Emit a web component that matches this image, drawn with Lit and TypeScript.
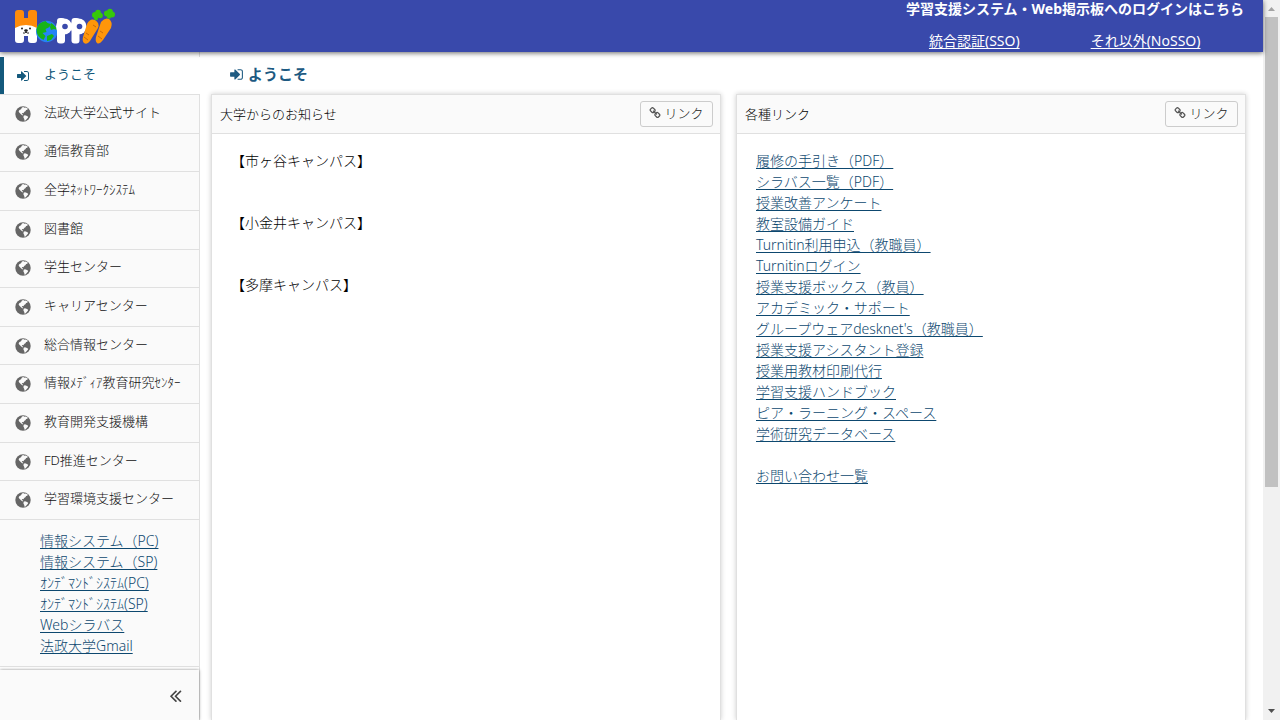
import { LitElement, html, css, svg } from "lit";
import { customElement, property } from "lit/decorators.js";

const icons: Record<string, unknown> = {
  signin: svg`<path d="M1312 896q0 26-19 45l-544 544q-19 19-45 19t-45-19-19-45v-288h-448q-26 0-45-19t-19-45v-384q0-26 19-45t45-19h448v-288q0-26 19-45t45-19 45 19l544 544q19 19 19 45zm352-352v704q0 119-84.5 203.500t-203.500 84.500h-320q-13 0-22.500-9.500t-9.500-22.500q0-4-1-20t-.5-26.500 3-23.500 10-19.500 20.500-6.500h320q66 0 113-47t47-113v-704q0-66-47-113t-113-47h-312l-11.500-1-11.500-3-8-5.500-7-9-2-13.500q0-4-1-20t-.5-26.500 3-23.500 10-19.500 20.500-6.500h320q119 0 203.500 84.500t84.500 203.500z"/>`,
  link: svg`<path d="M1520 1216q0-40-28-68l-208-208q-28-28-68-28-42 0-72 32 3 3 19 18.500t21.500 21.500 15 19 13 25.500 3.500 27.500q0 40-28 68t-68 28q-15 0-27.500-3.500t-25.500-13-19-15-21.500-21.500-18.500-19q-33 31-33 73 0 40 28 68l206 207q27 27 68 27 40 0 68-26l147-146q28-28 28-67zm-703-705q0-40-28-68l-206-207q-28-28-68-28-39 0-68 27l-147 146q-28 28-28 67 0 40 28 68l208 208q27 27 68 27 42 0 72-31-3-3-19-18.500t-21.500-21.500-15-19-13-25.500-3.500-27.500q0-40 28-68t68-28q15 0 27.500 3.500t25.500 13 19 15 21.500 21.500 18.500 19q33-31 33-73zm895 705q0 120-85 203l-147 146q-83 83-203 83-121 0-204-85l-206-207q-83-83-83-203 0-123 88-209l-88-88q-86 88-208 88-120 0-204-84l-208-208q-84-84-84-204t85-203l147-146q83-83 203-83 121 0 204 85l206 207q83 83 83 203 0 123-88 209l88 88q86-88 208-88 120 0 204 84l208 208q84 84 84 204z"/>`,
  collapse: svg`<path d="M1011 1376q0 13-10 23l-50 50q-10 10-23 10t-23-10l-466-466q-10-10-10-23t10-23l466-466q10-10 23-10t23 10l50 50q10 10 10 23t-10 23l-393 393 393 393q10 10 10 23zm384 0q0 13-10 23l-50 50q-10 10-23 10t-23-10l-466-466q-10-10-10-23t10-23l466-466q10-10 23-10t23 10l50 50q10 10 10 23t-10 23l-393 393 393 393q10 10 10 23z"/>`,
  globe: svg`<circle cx="896" cy="896" r="768"/>
    <path fill="#fafafa" d="M800 240l120-30 110 60 130-20 210 110-40 110-130 40-60 110-100 50-110 150-100-30-60 90 90 50 50 100-100-20-140-110-150-150-60-140 90-120 150-70 50-90zM960 1080l130-60 150 60 170 80-30 110-110 120-130 160-90 20-30-180-80-140z"/>`,
};

@customElement("ui-icon")
class UiIcon extends LitElement {
  @property() name = "globe";
  static styles = css`
    :host { display: inline-flex; flex: none; }
    svg { width: 100%; height: 100%; fill: currentColor; }
  `;
  render() {
    return html`<svg viewBox="0 0 1792 1792" aria-hidden="true">${icons[this.name]}</svg>`;
  }
}

@customElement("link-panel")
class LinkPanel extends LitElement {
  @property() heading = "";
  static styles = css`
    :host {
      display: flex; flex-direction: column; flex: 1; min-width: 0;
      background: #fff; border: 1px solid #e0e0e0; border-bottom: 0;
      box-shadow: 0 0 5px rgba(0, 0, 0, 0.2);
    }
    .head {
      display: flex; align-items: center; justify-content: space-between;
      height: 38px; padding: 0 7px 0 8px; background: #fafafa; border-bottom: 1px solid #e0e0e0;
    }
    h2 { margin: 0; font-size: 13px; font-weight: inherit; line-height: 20px; color: #000; }
    button {
      display: flex; align-items: center; justify-content: center; gap: 3px;
      width: 73px; height: 26px; padding: 0 0 2px; font: inherit; font-size: 13px; line-height: 20px;
      color: #222; background: #fafafa; border: 1px solid #ccc; border-radius: 3px;
    }
    ui-icon { width: 12px; height: 12px; color: #555; }
    .body { padding: 16px 19px; line-height: 21px; }
  `;
  render() {
    return html`
      <div class="head">
        <h2>${this.heading}</h2>
        <button type="button"><ui-icon name="link"></ui-icon>リンク</button>
      </div>
      <div class="body"><slot></slot></div>
    `;
  }
}

const SITES = [
  "法政大学公式サイト", "通信教育部", "全学ﾈｯﾄﾜｰｸｼｽﾃﾑ", "図書館", "学生センター", "キャリアセンター",
  "総合情報センター", "情報ﾒﾃﾞｨｱ教育研究ｾﾝﾀｰ", "教育開発支援機構", "FD推進センター", "学習環境支援センター",
];
const SYSTEMS = [
  "情報システム（PC)", "情報システム（SP)", "ｵﾝﾃﾞﾏﾝﾄﾞｼｽﾃﾑ(PC)", "ｵﾝﾃﾞﾏﾝﾄﾞｼｽﾃﾑ(SP)", "Webシラバス", "法政大学Gmail",
];
const CAMPUSES = ["【市ヶ谷キャンパス】", "【小金井キャンパス】", "【多摩キャンパス】"];
const LINKS = [
  "履修の手引き（PDF）", "シラバス一覧（PDF）", "授業改善アンケート", "教室設備ガイド", "Turnitin利用申込（教職員）",
  "Turnitinログイン", "授業支援ボックス（教員）", "アカデミック・サポート", "グループウェアdesknet's（教職員）",
  "授業支援アシスタント登録", "授業用教材印刷代行", "学習支援ハンドブック", "ピア・ラーニング・スペース", "学術研究データベース",
];

@customElement("app-root")
class AppRoot extends LitElement {
  static styles = css`
    :host {
      display: grid; grid-template-columns: minmax(0, 1fr) 17px; height: 100vh; overflow: hidden;
      font-family: "Noto Sans", "Noto Sans CJK JP", sans-serif; font-size: 14px; line-height: 21px;
      font-weight: 300; color: #000; background: #fff;
    }
    a { color: #0d486f; text-decoration: underline; text-underline-offset: 2px; }
    .page { display: flex; flex-direction: column; min-height: 0; }
    header {
      display: flex; justify-content: space-between; height: 52px; flex: none; z-index: 1;
      padding: 0 19px 0 14px; background: #3949ab; color: #fff;
      box-shadow: 0 1px 5px rgba(0, 0, 0, 0.6);
    }
    .logo { display: block; width: 102px; height: 52px; }
    .login p { margin: 0; font-weight: 700; line-height: 18px; white-space: nowrap; }
    .login nav { display: flex; gap: 71px; padding: 12px 0 0 23px; }
    .login a { color: #fff; font-weight: 400; }

    .columns { display: flex; flex: 1; min-height: 0; }
    aside {
      display: flex; flex-direction: column; flex: none; width: 199px; padding-top: 5px;
      border-right: 1px solid #e0e0e0;
    }
    .current {
      display: flex; align-items: center; gap: 14px; flex: none; height: 37px; padding-left: 12px; margin-right: -1px;
      border-left: 4px solid #14597c; background: #fff;
    }
    .current, .site { color: #111; font-size: 13px; line-height: 20px; text-decoration: none; }
    .current { color: #14597c; font-weight: 400; }
    .current ui-icon { width: 14px; height: 14px; }
    .label { padding-bottom: 4px; }
    .sites { display: flex; flex-direction: column; flex: 1; margin: 0; padding: 0; list-style: none; background: #fafafa; }
    .sites li { display: flex; flex: 1; border-top: 1px solid #e0e0e0; }
    .site { display: flex; align-items: center; flex: 1; gap: 12px; padding-left: 14px; white-space: nowrap; }
    .site ui-icon { width: 18px; height: 18px; color: #666; }
    .systems {
      margin: 0; padding: 10px 0 10px 40px; list-style: none; background: #fafafa;
      border: 1px solid #e0e0e0; border-width: 1px 0;
    }
    .foot {
      display: flex; justify-content: flex-end; align-items: center; box-sizing: border-box; flex: none;
      height: 50px; margin-top: 3px; padding-right: 13px;
      background: #fafafa; box-shadow: 0 0 3px rgba(0, 0, 0, 0.45);
    }
    .foot button { display: flex; padding: 0; border: 0; background: none; color: #444; }
    .foot ui-icon { width: 21px; height: 21px; }

    main { display: flex; flex-direction: column; flex: 1; min-width: 0; padding: 12px 17px 0 11px; }
    h1 {
      display: flex; align-items: center; gap: 4px; margin: 0; padding: 0 0 10px 18px;
      font-size: 15px; line-height: 20px; color: #1d5a82;
    }
    h1 ui-icon { width: 15px; height: 15px; }
    .panels { display: flex; flex: 1; gap: 15px; }
    .campus { margin: 0 0 41px; }
    .links { margin: 0; padding: 0; list-style: none; }
    .links li:last-child { margin-top: 21px; }

    .scroll { display: flex; flex-direction: column; align-items: center; background: #f1f1f1; }
    .scroll svg { width: 17px; height: 17px; flex: none; }
    .track { flex: 1; width: 13px; }
    .thumb { height: 68.500%; background: #c1c1c1; }
  `;

  render() {
    return html`
      <div class="page">
        <header>
          <svg class="logo" viewBox="0 0 102 52" role="img" aria-label="Hoppii">
            <path fill="#fff" d="M1 24h22v16q0 3-3 3h-3q-3 0-3-3v-4h-4v4q0 3-3 3H4q-3 0-3-3z"/>
            <path fill="#ff8c0a" d="M1 28V13q0-3 3-3h3q3 0 3 3v5h4v-5q0-3 3-3h3q3 0 3 3v15q-5-3-11-3T1 28z"/>
            <circle cx="8" cy="28.500" r="1" fill="#222"/><circle cx="16" cy="28.500" r="1" fill="#222"/>
            <ellipse cx="12" cy="30.500" rx="1.800" ry="1.200" fill="#222"/>
            <path fill="none" stroke="#222" d="M12 31v1q-1 1.500-3 1m3-1q1 1.500 3 1"/>
            <circle cx="32.700" cy="31.500" r="10.700" fill="#2683f5"/>
            <path fill="#17b317" d="M22.500 29q2-7 9-8l2 2 3 1-1 3-4 2 1 3-4 1 3 3-2 4q-7-3-7-11zM37 23q5 3 6 7l-3-1-3 1-1-3zM33 36l5-2 2 2-3 4-4 1z"/>
            <g fill="#fff">
              <rect x="43" y="18" width="8" height="25.500" rx="3"/><circle cx="50" cy="26.500" r="8"/>
              <rect x="57.500" y="18" width="8" height="25.500" rx="3"/><circle cx="64.500" cy="26.500" r="8"/>
            </g>
            <g fill="#3949ab"><circle cx="51" cy="26.500" r="2.800"/><circle cx="65.500" cy="26.500" r="2.800"/></g>
            <g fill="#ff960a">
              <path d="M73 24q3-6 8-4 5 3 3 8l-8 13q-3 4-6 2-2-2-1-6zM87 22q4-5 8-3 4 3 2 9l-8 12q-4 5-6 3-2-2-1-6z"/>
            </g>
            <path fill="none" stroke="#c76a09" d="M72 33l3 2m-5 2 4 3M86 31l3 2m-5 3 4 3M79 25l3 2"/>
            <g fill="#36c90a">
              <circle cx="81" cy="15" r="3"/><circle cx="84" cy="12.500" r="2.800"/><circle cx="86" cy="15.500" r="2.800"/><circle cx="82" cy="18" r="2.200"/>
              <circle cx="93" cy="13.500" r="3"/><circle cx="96" cy="11.500" r="2.800"/><circle cx="98" cy="14.500" r="3"/><circle cx="95" cy="16.500" r="2.200"/>
            </g>
          </svg>
          <div class="login">
            <p>学習支援システム・Web掲示板へのログインはこちら</p>
            <nav><a href="#sso">統合認証(SSO)</a><a href="#nosso">それ以外(NoSSO)</a></nav>
          </div>
        </header>
        <div class="columns">
          <aside>
            <a class="current" href="#welcome"><ui-icon name="signin"></ui-icon><span class="label">ようこそ</span></a>
            <ul class="sites">
              ${SITES.map((s) => html`<li><a class="site" href="#site"><ui-icon name="globe"></ui-icon><span class="label">${s}</span></a></li>`)}
            </ul>
            <ul class="systems">${SYSTEMS.map((s) => html`<li><a href="#system">${s}</a></li>`)}</ul>
            <div class="foot"><button type="button" aria-label="メニューを折りたたむ"><ui-icon name="collapse"></ui-icon></button></div>
          </aside>
          <main>
            <h1><ui-icon name="signin"></ui-icon>ようこそ</h1>
            <div class="panels">
              <link-panel heading="大学からのお知らせ">
                ${CAMPUSES.map((c) => html`<p class="campus">${c}</p>`)}
              </link-panel>
              <link-panel heading="各種リンク">
                <ul class="links">
                  ${LINKS.map((l) => html`<li><a href="#link">${l}</a></li>`)}
                  <li><a href="#contact">お問い合わせ一覧</a></li>
                </ul>
              </link-panel>
            </div>
          </main>
        </div>
      </div>
      <div class="scroll" aria-hidden="true">
        <svg viewBox="0 0 17 17"><path fill="#a3a3a3" d="M5 11h7L8.500 7z"/></svg>
        <div class="track"><div class="thumb"></div></div>
        <svg viewBox="0 0 17 17"><path fill="#505050" d="M5 6h7L8.500 10z"/></svg>
      </div>
    `;
  }
}
